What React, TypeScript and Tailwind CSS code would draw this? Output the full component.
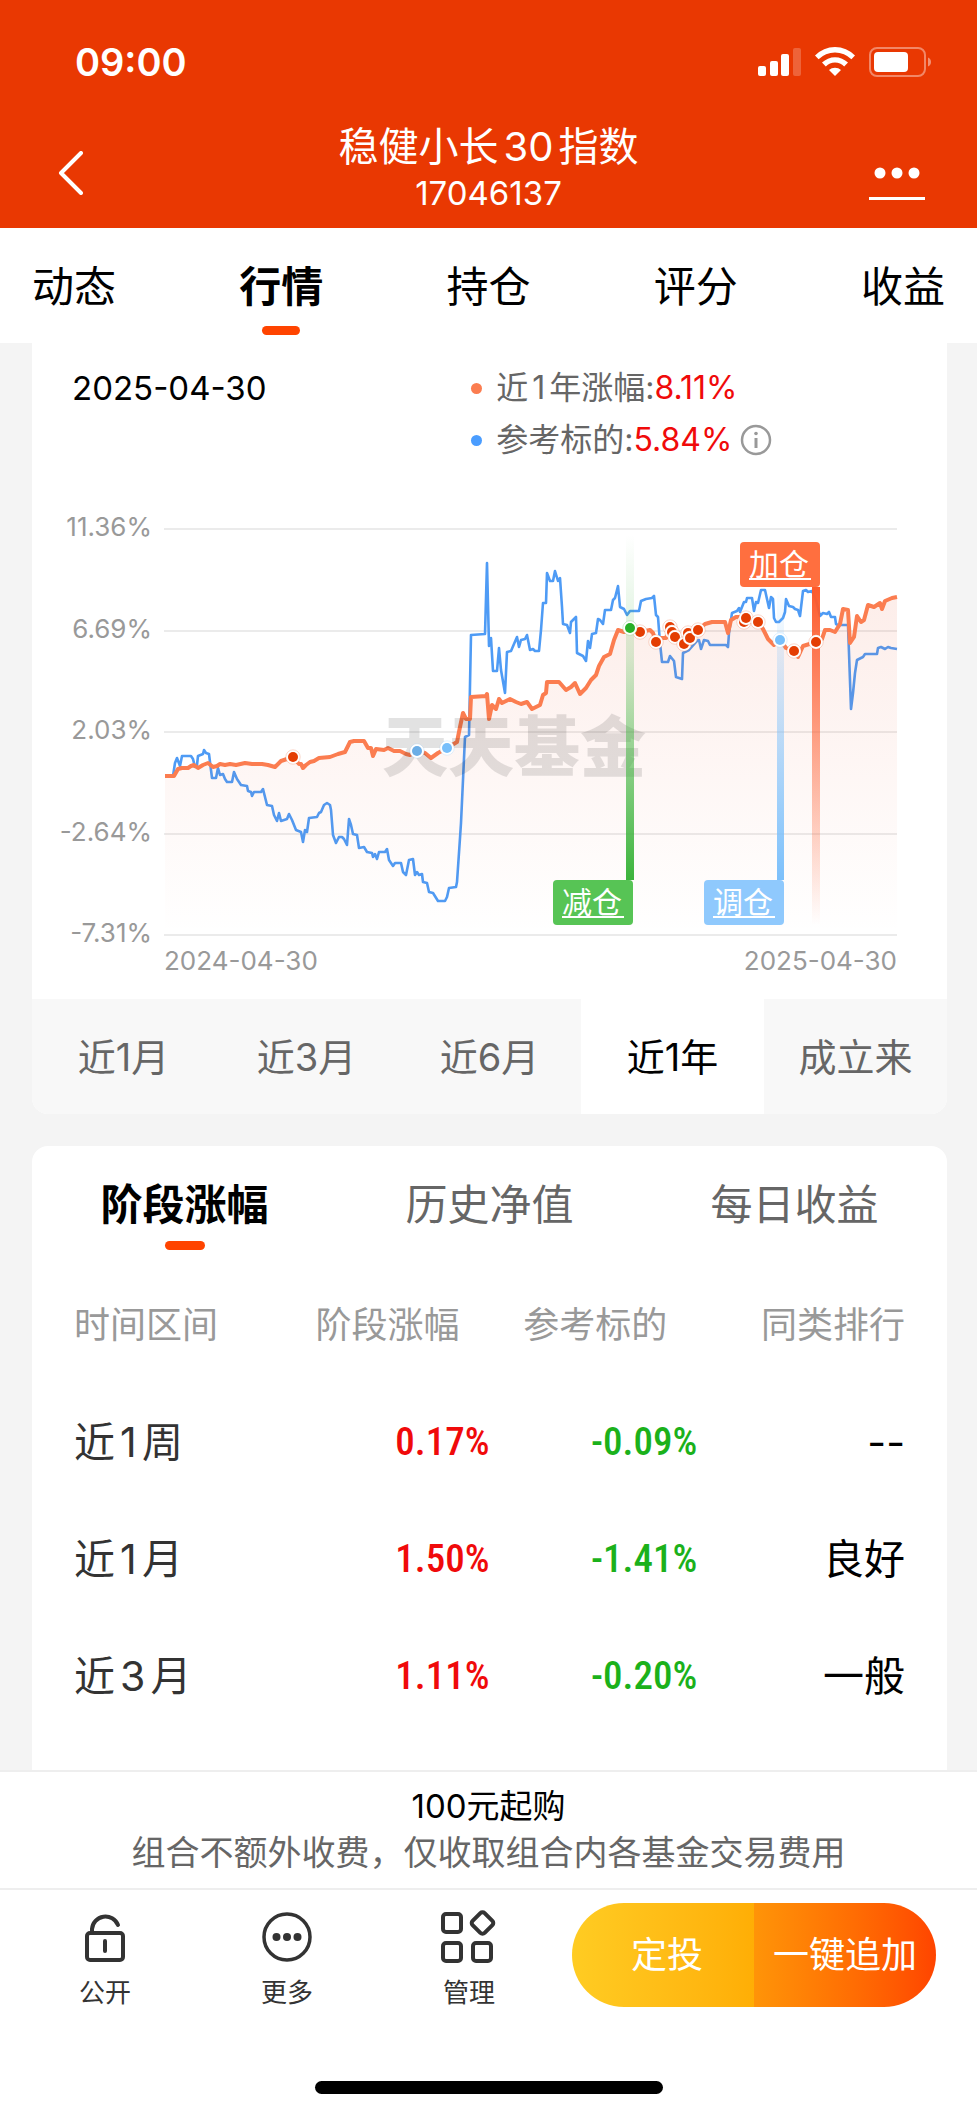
import { useState } from 'react'

const TABS = ['动态', '行情', '持仓', '评分', '收益']
const PERIODS = ['近1月', '近3月', '近6月', '近1年', '成立来']
const DETAIL_TABS = ['阶段涨幅', '历史净值', '每日收益']

const ROWS = [
    { period: '近1周', gain: '0.17%', benchmark: '-0.09%', rank: '--' },
    { period: '近1月', gain: '1.50%', benchmark: '-1.41%', rank: '良好' },
    { period: '近3月', gain: '1.11%', benchmark: '-0.20%', rank: '一般' },
]

const GRID = [
    { y: 529, label: '11.36%' },
    { y: 631, label: '6.69%' },
    { y: 732, label: '2.03%' },
    { y: 834, label: '-2.64%' },
    { y: 935, label: '-7.31%' },
]

const FUND_LINE =
    '165,776 174,776 178,769 182,768 188,768 191,766 194,765 198,768 203,765 208,763 213,767 217,766 220,764 225,765 230,764 236,765 245,763 252,764 262,764 268,765 275,767 281,761 287,759 293,757 299,764 301,764 303,768 306,765 310,762 314,761 319,758 330,757 338,754 345,752 350,742 354,741 364,741 368,748 371,748 373,756 376,749 384,750 388,748 394,751 400,751 406,754 410,755 417,751 425,753 431,758 438,753 447,748 457,742 460,727 463,713 466,719 470,719 471,697 486,696 487,694 489,719 492,705 496,709 499,699 502,703 510,699 516,702 521,704 527,702 532,709 540,705 543,695 546,693 547,682 559,682 566,690 571,687 575,683 580,694 586,688 591,680 596,675 599,666 604,657 610,654 614,640 618,630 624,632 630,628 640,632 650,630 653,633 656,642 661,638 666,638 670,627 672,632 675,637 684,644 690,638 698,630 705,624 712,622 725,622 728,633 731,620 736,617 746,617 752,622 758,622 763,629 768,639 774,645 780,640 786,648 794,651 798,657 803,646 816,642 822,639 825,630 830,630 835,632 840,624 843,609 848,610 850,643 854,637 857,616 861,622 864,620 868,605 874,607 880,603 882,609 885,601 892,598 897,597'

const BENCHMARK_LINE =
    '165,776 173,776 175,763 177,758 180,766 182,756 191,756 193,759 195,767 197,765 198,756 203,754 204,750 206,753 209,754 211,770 212,778 216,778 218,768 220,775 223,774 225,779 227,782 232,782 234,772 237,779 241,785 247,786 248,791 251,792 252,796 254,792 261,792 263,789 265,797 267,805 272,806 274,815 277,821 279,813 281,821 287,819 289,814 292,820 296,830 301,832 303,842 305,830 307,832 309,818 317,817 319,813 321,812 324,805 327,803 330,805 331,810 333,835 336,843 339,837 342,837 344,839 347,845 349,819 351,825 353,834 357,835 359,848 364,847 367,852 372,853 373,857 375,854 377,859 379,852 385,852 387,849 389,860 393,866 395,863 401,863 403,872 406,875 409,860 413,859 415,875 417,872 419,875 422,874 423,882 427,883 429,892 433,893 438,901 445,901 447,897 449,888 456,887 457,882 460,838 461,823 465,737 469,735 471,635 485,634 487,563 489,646 491,638 493,671 497,671 499,648 501,670 505,693 507,652 511,651 517,637 519,647 521,640 525,639 527,635 530,650 533,649 535,651 539,651 541,630 543,603 546,603 547,573 550,581 553,581 555,571 558,581 560,578 562,607 563,624 567,625 570,633 571,622 576,617 577,653 583,656 586,661 588,641 590,648 592,634 596,633 598,619 600,620 603,624 605,610 611,610 613,600 615,598 618,586 620,607 624,609 627,615 630,611 639,611 641,601 646,599 652,598 654,596 656,615 658,617 660,643 662,662 668,662 670,656 674,661 676,677 682,679 683,653 689,650 697,641 699,640 701,649 704,640 708,641 710,645 726,645 728,647 729,633 732,613 737,611 739,608 740,612 744,602 746,602 747,598 752,598 754,611 756,602 758,603 761,590 765,590 769,608 771,597 773,599 774,618 776,622 779,622 783,618 785,612 786,599 789,606 793,607 795,609 798,610 800,616 803,591 806,590 808,592 812,591 816,600 820,616 823,613 827,614 829,612 831,617 835,617 836,624 838,625 848,625 849,653 851,709 853,693 855,673 857,660 863,657 865,654 877,654 878,648 881,647 885,649 888,647 891,648 897,649'

const MARKERS = [
    { x: 293, y: 757, color: '#e43d02' },
    { x: 417, y: 751, color: '#6caee6' },
    { x: 447, y: 748, color: '#77bffb' },
    { x: 640, y: 632, color: '#e43d02' },
    { x: 630, y: 628, color: '#27b027' },
    { x: 656, y: 642, color: '#e43d02' },
    { x: 670, y: 627, color: '#e43d02' },
    { x: 672, y: 632, color: '#e43d02' },
    { x: 675, y: 637, color: '#e43d02' },
    { x: 688, y: 633, color: '#e43d02' },
    { x: 684, y: 644, color: '#e43d02' },
    { x: 690, y: 638, color: '#e43d02' },
    { x: 698, y: 630, color: '#e43d02' },
    { x: 744, y: 622, color: '#e43d02' },
    { x: 746, y: 618, color: '#e43d02' },
    { x: 758, y: 622, color: '#e43d02' },
    { x: 780, y: 640, color: '#77bffb' },
    { x: 794, y: 651, color: '#e43d02' },
    { x: 816, y: 642, color: '#e43d02' },
]

const FLAGS = [
    { label: '减仓', x: 553, y: 880, color: '#57c455' },
    { label: '调仓', x: 704, y: 880, color: '#8fc9fd' },
    { label: '加仓', x: 740, y: 542, color: '#ff6f3f' },
]

function StatusBar() {
    return (
        <div className="flex h-[124px] items-center justify-between pl-[75px] pr-[45px]">
            <span className="text-[38px] font-semibold leading-none">09:00</span>
            <svg width="176" height="34" viewBox="0 0 176 34" fill="#fff" aria-hidden="true">
                <rect x="2" y="21" width="8" height="10" rx="2" />
                <rect x="14" y="16" width="8" height="15" rx="2" />
                <rect x="25" y="9" width="8" height="22" rx="2" />
                <rect x="37" y="3" width="8" height="28" rx="2" opacity="0.22" />
                <path d="M59 10.5a28 28 0 0 1 40 0l-3.6 3.8a23 23 0 0 0-32.8 0z" />
                <path d="M66 17.6a18.5 18.5 0 0 1 26 0l-3.8 3.8a13 13 0 0 0-18.4 0z" />
                <path d="M73 25a9 9 0 0 1 12 0l-6 6z" />
                <rect x="114" y="3" width="55" height="28" rx="7" fill="none" stroke="#fff" strokeWidth="2" opacity="0.4" />
                <rect x="118" y="7" width="34" height="20" rx="4" />
                <path d="M172 12.5c4 1.5 4 7.5 0 9z" opacity="0.45" />
            </svg>
        </div>
    )
}

function Header() {
    return (
        <header className="bg-[#e93802] text-white">
            <StatusBar />
            <div className="flex h-[104px] items-start justify-between px-[52px]">
                <button type="button" aria-label="返回" className="pt-[27px]">
                    <svg width="56" height="44" viewBox="0 0 56 44" fill="none" stroke="#fff" strokeWidth="4">
                        <path d="M29 2 9 22l20 20" strokeLinecap="round" strokeLinejoin="round" />
                    </svg>
                </button>
                <div className="text-center">
                    <h1 className="text-[40px] leading-[46px] [text-autospace:normal]">稳健小长30指数</h1>
                    <p className="text-[33px] leading-[46px]">17046137</p>
                </div>
                <button type="button" aria-label="更多操作" className="pt-[42px]">
                    <svg width="56" height="36" viewBox="0 0 56 36" fill="#fff">
                        <circle cx="11" cy="7" r="5.5" />
                        <circle cx="28" cy="7" r="5.5" />
                        <circle cx="45" cy="7" r="5.5" />
                        <rect y="31" width="56" height="3" />
                    </svg>
                </button>
            </div>
        </header>
    )
}

function TrendChart() {
    return (
        <svg viewBox="32 466 915 533" className="block h-auto w-full" role="img" aria-label="近1年涨幅走势">
            <defs>
                <linearGradient id="area" x1="0" y1="597" x2="0" y2="935" gradientUnits="userSpaceOnUse">
                    <stop offset="0" stopColor="#e8502a" stopOpacity="0.1" />
                    <stop offset="1" stopColor="#e8502a" stopOpacity="0" />
                </linearGradient>
                <linearGradient id="reduce" x1="0" y1="0" x2="0" y2="1">
                    <stop offset="0" stopColor="#3cb43c" stopOpacity="0" />
                    <stop offset="0.35" stopColor="#3cb43c" stopOpacity="0.2" />
                    <stop offset="1" stopColor="#3cb43c" />
                </linearGradient>
                <linearGradient id="adjust" x1="0" y1="0" x2="0" y2="1">
                    <stop offset="0" stopColor="#7cc0fb" stopOpacity="0" />
                    <stop offset="1" stopColor="#7cc0fb" />
                </linearGradient>
                <linearGradient id="increase" x1="0" y1="0" x2="0" y2="1">
                    <stop offset="0" stopColor="#fd5a2b" />
                    <stop offset="1" stopColor="#fd5a2b" stopOpacity="0" />
                </linearGradient>
            </defs>

            {GRID.map((line) => (
                <g key={line.label}>
                    <line x1="164" x2="897" y1={line.y} y2={line.y} stroke="#ebebeb" strokeWidth="2" />
                    <text x="152" y={line.y + 7} textAnchor="end" fontSize="26" fill="#999">
                        {line.label}
                    </text>
                </g>
            ))}
            <text x="164" y="970" fontSize="26" fill="#999">2024-04-30</text>
            <text x="897" y="970" fontSize="26" fill="#999" textAnchor="end">2025-04-30</text>

            <polyline points={BENCHMARK_LINE} fill="none" stroke="#4e9bf5" strokeWidth="2.6" strokeLinejoin="round" />
            <polygon points={`${FUND_LINE} 897,935 165,935`} fill="url(#area)" />
            <polyline points={FUND_LINE} fill="none" stroke="#fb7d50" strokeWidth="4" strokeLinejoin="round" />

            <text x="382" y="771" fontSize="66" fontWeight="900" fill="#000" opacity="0.11">天天基金</text>

            <rect x="626" y="535" width="8" height="345" fill="url(#reduce)" />
            <rect x="777" y="587" width="7" height="293" fill="url(#adjust)" />
            <rect x="812" y="587" width="8" height="338" fill="url(#increase)" />

            {MARKERS.map((m) => (
                <g key={`${m.x}-${m.y}`}>
                    <circle cx={m.x} cy={m.y} r="7.2" fill="#fff" stroke={m.color} strokeOpacity="0.25" strokeWidth="0.8" />
                    <circle cx={m.x} cy={m.y} r="5" fill={m.color} />
                </g>
            ))}

            {FLAGS.map((flag) => (
                <g key={flag.label}>
                    <rect x={flag.x} y={flag.y} width="80" height="45" rx="4" fill={flag.color} />
                    <text x={flag.x + 9} y={flag.y + 33} fontSize="30" fill="#fff">{flag.label}</text>
                    <rect x={flag.x + 9} y={flag.y + 36} width="62" height="2" fill="#fff" />
                </g>
            ))}
        </svg>
    )
}

function TrendCard() {
    const [period, setPeriod] = useState('近1年')

    return (
        <section className="overflow-hidden rounded-b-2xl bg-white">
            <div className="flex items-start pt-[19px] text-[32px] leading-[52px]">
                <time className="w-[48%] pl-10 text-[33px] text-black">2025-04-30</time>
                <ul className="text-[#666] [text-autospace:normal]">
                    <li className="flex items-center">
                        <i className="mr-3.5 size-[11px] rounded-full bg-[#fb7d50]" />
                        近1年涨幅:<span className="text-[#f00a0a]">8.11%</span>
                    </li>
                    <li className="flex items-center">
                        <i className="mr-3.5 size-[11px] rounded-full bg-[#4a9dff]" />
                        参考标的:<span className="text-[#f00a0a]">5.84%</span>
                        <svg width="32" height="32" viewBox="0 0 32 32" className="ml-2" aria-hidden="true">
                            <circle cx="16" cy="16" r="14" fill="none" stroke="#999" strokeWidth="2.5" />
                            <circle cx="16" cy="9.5" r="1.8" fill="#999" />
                            <path d="M16 14v10" stroke="#999" strokeWidth="3" />
                        </svg>
                    </li>
                </ul>
            </div>
            <TrendChart />
            <div className="grid grid-cols-5 bg-[#f8f8f8]">
                {PERIODS.map((item) => (
                    <button
                        key={item}
                        type="button"
                        onClick={() => setPeriod(item)}
                        className={`h-[115px] pt-0.5 text-[38px] ${item === period ? 'bg-white text-black' : 'text-[#666]'}`}
                    >
                        {item}
                    </button>
                ))}
            </div>
        </section>
    )
}

function DetailCard() {
    const [tab, setTab] = useState('阶段涨幅')

    return (
        <section className="mt-8 rounded-t-2xl bg-white pb-[35px]">
            <div className="grid grid-cols-3">
                {DETAIL_TABS.map((item) => (
                    <button
                        key={item}
                        type="button"
                        onClick={() => setTab(item)}
                        className={`relative h-[120px] pb-1 text-[42px] ${item === tab ? 'font-bold text-black' : 'text-[#666]'}`}
                    >
                        {item}
                        {item === tab && (
                            <span className="absolute bottom-4 left-1/2 h-[9px] w-10 -translate-x-1/2 rounded-full bg-[#ff4400]" />
                        )}
                    </button>
                ))}
            </div>
            <div className="px-[42px]">
                <table className="w-full table-fixed text-right">
                    <thead>
                        <tr className="h-[118px] text-4xl text-[#999]">
                            <th className="text-left font-normal">时间区间</th>
                            <th className="pr-[30px] font-normal">阶段涨幅</th>
                            <th className="pr-[30px] font-normal">参考标的</th>
                            <th className="font-normal">同类排行</th>
                        </tr>
                    </thead>
                    <tbody>
                        {ROWS.map((row) => (
                            <tr key={row.period} className="h-[117px] text-[41px]">
                                <td className="text-left text-[#333] [text-autospace:normal]">{row.period}</td>
                                <td className="font-['Roboto_Condensed','Roboto',sans-serif] text-[39px] font-medium text-[#f00a0a]">{row.gain}</td>
                                <td className="font-['Roboto_Condensed','Roboto',sans-serif] text-[39px] font-medium text-[#1bb11b]">{row.benchmark}</td>
                                <td className="text-black">{row.rank}</td>
                            </tr>
                        ))}
                    </tbody>
                </table>
            </div>
        </section>
    )
}

function UnlockIcon() {
    return (
        <svg width="56" height="56" viewBox="0 0 56 56" fill="none" stroke="#333" strokeWidth="4" strokeLinecap="round">
            <rect x="10" y="26" width="36" height="27" rx="3" />
            <path d="M15 25v-3a13.5 13.5 0 0 1 26-4M28 34v10" />
        </svg>
    )
}

function MoreIcon() {
    return (
        <svg width="56" height="56" viewBox="0 0 56 56" fill="#333">
            <circle cx="28" cy="30" r="23" fill="none" stroke="#333" strokeWidth="3.5" />
            <circle cx="17.5" cy="30" r="4" />
            <circle cx="28" cy="30" r="4" />
            <circle cx="38.5" cy="30" r="4" />
        </svg>
    )
}

function ManageIcon() {
    return (
        <svg width="56" height="56" viewBox="0 0 56 56" fill="none" stroke="#333" strokeWidth="4">
            <rect x="2" y="7" width="18" height="18" rx="3" />
            <rect x="2" y="36" width="18" height="18" rx="3" />
            <rect x="32" y="36" width="18" height="18" rx="3" />
            <rect x="33" y="7.5" width="17" height="17" rx="3" transform="rotate(45 41.5 16)" />
        </svg>
    )
}

const ACTIONS = [
    { label: '公开', Icon: UnlockIcon },
    { label: '更多', Icon: MoreIcon },
    { label: '管理', Icon: ManageIcon },
]

function Footer() {
    return (
        <footer className="sticky bottom-0 bg-white">
            <div className="border-t-2 border-[#eee] pt-[11px] pb-3 text-center">
                <p className="text-[33px] leading-[46px] text-black">100元起购</p>
                <p className="text-[34px] leading-[47px] text-[#666]">组合不额外收费，仅收取组合内各基金交易费用</p>
            </div>
            <div className="flex items-start border-t-2 border-[#eee] pt-[13px] pr-[41px] pl-3.5">
                <div className="grid flex-3 grid-cols-3 pr-3">
                    {ACTIONS.map(({ label, Icon }) => (
                        <button key={label} type="button" className="flex flex-col items-center pt-1 text-[26px] leading-9 text-[#333]">
                            <Icon />
                            <span className="mt-3">{label}</span>
                        </button>
                    ))}
                </div>
                <div className="grid h-[104px] flex-2 grid-cols-2 overflow-hidden rounded-full text-4xl text-white">
                    <button type="button" className="bg-linear-to-r from-[#ffcc22] to-[#ffae05] pl-2">定投</button>
                    <button type="button" className="whitespace-nowrap bg-linear-to-r from-[#ff9408] to-[#ff4400]">一键追加</button>
                </div>
            </div>
            <div className="flex justify-center pt-[70px] pb-5">
                <div className="h-[13px] w-[348px] rounded-full bg-black" />
            </div>
        </footer>
    )
}

export default function App() {
    const [tab, setTab] = useState('行情')

    return (
        <div className="min-h-screen bg-[#f4f4f4] font-['Inter','Noto_Sans_CJK_SC',sans-serif]">
            <Header />
            <nav className="flex justify-between bg-white px-8">
                {TABS.map((item) => (
                    <button
                        key={item}
                        type="button"
                        onClick={() => setTab(item)}
                        className={`relative h-[115px] pt-0.5 text-[42px] text-black ${item === tab ? 'font-bold' : ''}`}
                    >
                        {item}
                        {item === tab && (
                            <span className="absolute bottom-2 left-1/2 h-[9px] w-[38px] -translate-x-1/2 rounded-full bg-[#ff4400]" />
                        )}
                    </button>
                ))}
            </nav>
            <main className="pr-[30px] pl-8">
                <TrendCard />
                <DetailCard />
            </main>
            <Footer />
        </div>
    )
}
